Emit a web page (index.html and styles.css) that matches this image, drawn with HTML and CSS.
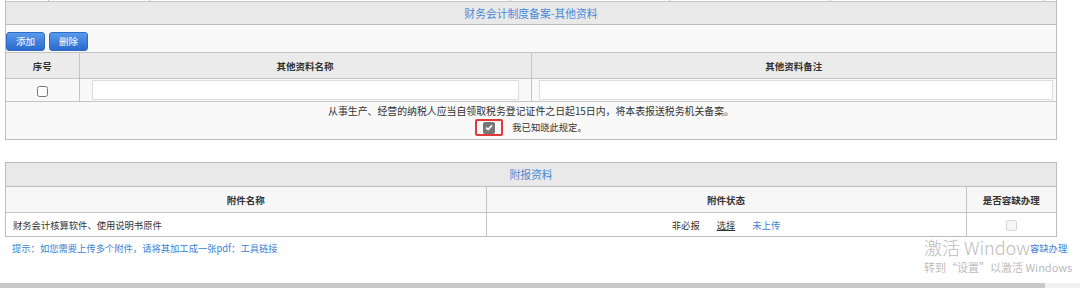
FILE: index.html
```html
<!DOCTYPE html>
<html lang="zh-CN">
<head>
    <meta charset="UTF-8">
    <meta name="viewport" content="width=device-width, initial-scale=1.0">
    <title>财务会计制度备案</title>
    <link rel="stylesheet" href="styles.css">
</head>
<body>
    <section class="page">
        <div class="prev-row">
            <span style="width:42px"></span>
            <span style="width:100px"></span>
            <span style="width:360px"></span>
            <span style="width:158px"></span>
            <span style="width:160px"></span>
            <span style="width:213px"></span>
            <span class="last"></span>
        </div>

        <section class="panel">
            <div class="panel-title">财务会计制度备案-其他资料</div>
            <div class="toolbar">
                <button class="btn">添加</button>
                <button class="btn">删除</button>
            </div>
            <table class="grid">
                <colgroup>
                    <col style="width:73px">
                    <col style="width:452px">
                    <col>
                </colgroup>
                <thead>
                    <tr>
                        <th>序号</th>
                        <th>其他资料名称</th>
                        <th>其他资料备注</th>
                    </tr>
                </thead>
                <tbody>
                    <tr class="edit-row">
                        <td class="center"><input type="checkbox" class="chk"></td>
                        <td class="name-cell"><input type="text" class="txt"></td>
                        <td class="memo-cell"><input type="text" class="txt"></td>
                    </tr>
                </tbody>
            </table>
            <div class="notice">
                <p class="notice-text">从事生产、经营的纳税人应当自领取税务登记证件之日起15日内，将本表报送税务机关备案。</p>
                <div class="agree">
                    <span class="agree-box"><span class="fake-check"><svg width="8" height="7" viewBox="0 0 8 7"><path d="M1 3.6 L3.1 5.6 L7 1.2" fill="none" stroke="#fff" stroke-width="1.6"/></svg></span></span>
                    <span class="agree-text">我已知晓此规定。</span>
                </div>
            </div>
        </section>

        <section class="panel attach">
            <div class="panel-title">附报资料</div>
            <table class="grid">
                <colgroup>
                    <col style="width:480px">
                    <col style="width:480px">
                    <col>
                </colgroup>
                <thead>
                    <tr>
                        <th>附件名称</th>
                        <th>附件状态</th>
                        <th>是否容缺办理</th>
                    </tr>
                </thead>
                <tbody>
                    <tr class="file-row">
                        <td class="left">财务会计核算软件、使用说明书原件</td>
                        <td class="center">
                            <span class="status">
                                <span>非必报</span>
                                <a class="pick">选择</a>
                                <span class="blue">未上传</span>
                            </span>
                        </td>
                        <td class="center"><span class="off-check"></span></td>
                    </tr>
                </tbody>
            </table>
        </section>

        <p class="hint">提示：如您需要上传多个附件，请将其加工成一张pdf：工具链接</p>
    </section>

    <div class="activate">
        <div class="act-big">激活 Windows<span class="act-link">容缺办理</span></div>
        <div class="act-small">转到“设置”以激活 Windows</div>
    </div>
    <div class="hscroll"><span class="thumb"></span></div>
</body>
</html>
```

FILE: styles.css
```css
body {
    margin: 0;
    padding: 0;
    font-family: "Noto Sans CJK SC", "Noto Sans", sans-serif;
    font-size: 9.3px;
    color: #333;
    background: #fff;
    height: 288px;
    overflow: hidden;
}

.page {
    width: 1052px;
    padding-left: 5px;
}

.prev-row {
    display: flex;
    height: 1px;
    border-bottom: 1px solid #c4c4c4;
    border-left: 1px solid #bbb;
    border-right: 1px solid #bbb;
}

.prev-row span {
    border-right: 1px solid #c4c4c4;
}

.prev-row span.last {
    flex: 1;
    border-right: 0;
}

.panel {
    border: 1px solid #bdbdbd;
    border-top: 0;
    background: #f9f9f9;
}

.panel-title {
    height: 22px;
    line-height: 22px;
    text-align: center;
    background: #e9e9e9;
    border-bottom: 1px solid #bdbdbd;
    color: #4a8bd6;
    font-size: 10.8px;
}

.toolbar {
    display: flex;
    gap: 4px;
    height: 26px;
    align-items: flex-end;
    padding-bottom: 1px;
}

.btn {
    width: 39px;
    height: 19px;
    padding: 0;
    border: 1px solid #2f6bc5;
    border-radius: 3px;
    background: linear-gradient(#5a9aea, #2a6ad0);
    color: #fff;
    font-family: inherit;
    font-size: 9.5px;
    line-height: 17px;
}

.grid {
    width: 100%;
    border-collapse: collapse;
    table-layout: fixed;
}

.grid th {
    height: 25px;
    background: #ebebeb;
    border: 1px solid #c4c4c4;
    border-left: 0;
    font-weight: bold;
    font-size: 9.5px;
    color: #333;
    padding: 0;
}

.grid th:last-child,
.grid td:last-child {
    border-right: 0;
}

.grid td {
    border: 1px solid #c4c4c4;
    border-left: 0;
    padding: 0;
}

.edit-row td {
    height: 22px;
    background: #f9f9f9;
}

.center {
    text-align: center;
}

.chk {
    width: 11px;
    height: 11px;
    margin: 0;
    vertical-align: middle;
}

.name-cell {
    padding: 0 12px !important;
}

.memo-cell {
    padding: 0 3px 0 7px !important;
}

.txt {
    box-sizing: border-box;
    width: 100%;
    height: 20px;
    border: 1px solid #dcdcdc;
    background: #fff;
    display: block;
}

.notice {
    height: 37px;
    text-align: center;
}

.notice-text {
    margin: 0;
    padding-top: 1px;
    line-height: 16px;
    font-size: 9.9px;
}

.agree {
    display: flex;
    justify-content: center;
    align-items: center;
    gap: 9px;
}

.agree-box {
    display: flex;
    align-items: center;
    justify-content: center;
    width: 24px;
    height: 13px;
    border: 2px solid #e23a3a;
    border-radius: 2px;
}

.fake-check {
    display: flex;
    align-items: center;
    justify-content: center;
    width: 12px;
    height: 12px;
    background: #777;
    border-radius: 2px;
}

.agree-text {
    line-height: 17px;
}

.attach {
    margin-top: 22px;
    border-top: 1px solid #bdbdbd;
    background: #fff;
}

.attach .panel-title {
    height: 23px;
    line-height: 23px;
}

.attach th {
    height: 25px;
    background: #f7f7f7;
    border-top: 0;
}

.file-row td {
    height: 23px;
    border-bottom: 0;
    background: #fff;
}

.left {
    text-align: left;
    padding-left: 7px !important;
}

.status {
    display: inline-flex;
    gap: 17px;
}

.pick {
    color: #333;
    text-decoration: underline;
}

.blue {
    color: #3c82d4;
}

.off-check {
    display: inline-block;
    width: 9px;
    height: 9px;
    border: 1px solid #d8d8d8;
    border-radius: 2px;
    background: #f7f7f7;
    vertical-align: middle;
}

.hint {
    margin: 3px 0 0 7px;
    color: #3c82d4;
    line-height: 16px;
}

.activate {
    position: absolute;
    left: 924px;
    top: 236px;
    color: #bcbcbc;
    white-space: nowrap;
}

.act-big {
    font-size: 18px;
    line-height: 22px;
    font-weight: 300;
    position: relative;
}

.act-link {
    position: absolute;
    left: 105px;
    top: 5px;
    padding-left: 1px;
    font-size: 9.3px;
    line-height: 14px;
    font-weight: normal;
    color: #3c82d4;
    background: rgba(255, 255, 255, 0.7);
}

.act-small {
    font-size: 11px;
    line-height: 15px;
    margin-top: 2px;
}

.hscroll {
    position: absolute;
    left: 0;
    bottom: 0;
    width: 1080px;
    height: 5px;
    background: #f1f1f1;
}

.thumb {
    display: block;
    width: 1045px;
    height: 5px;
    background: #c9c9c9;
}
```
